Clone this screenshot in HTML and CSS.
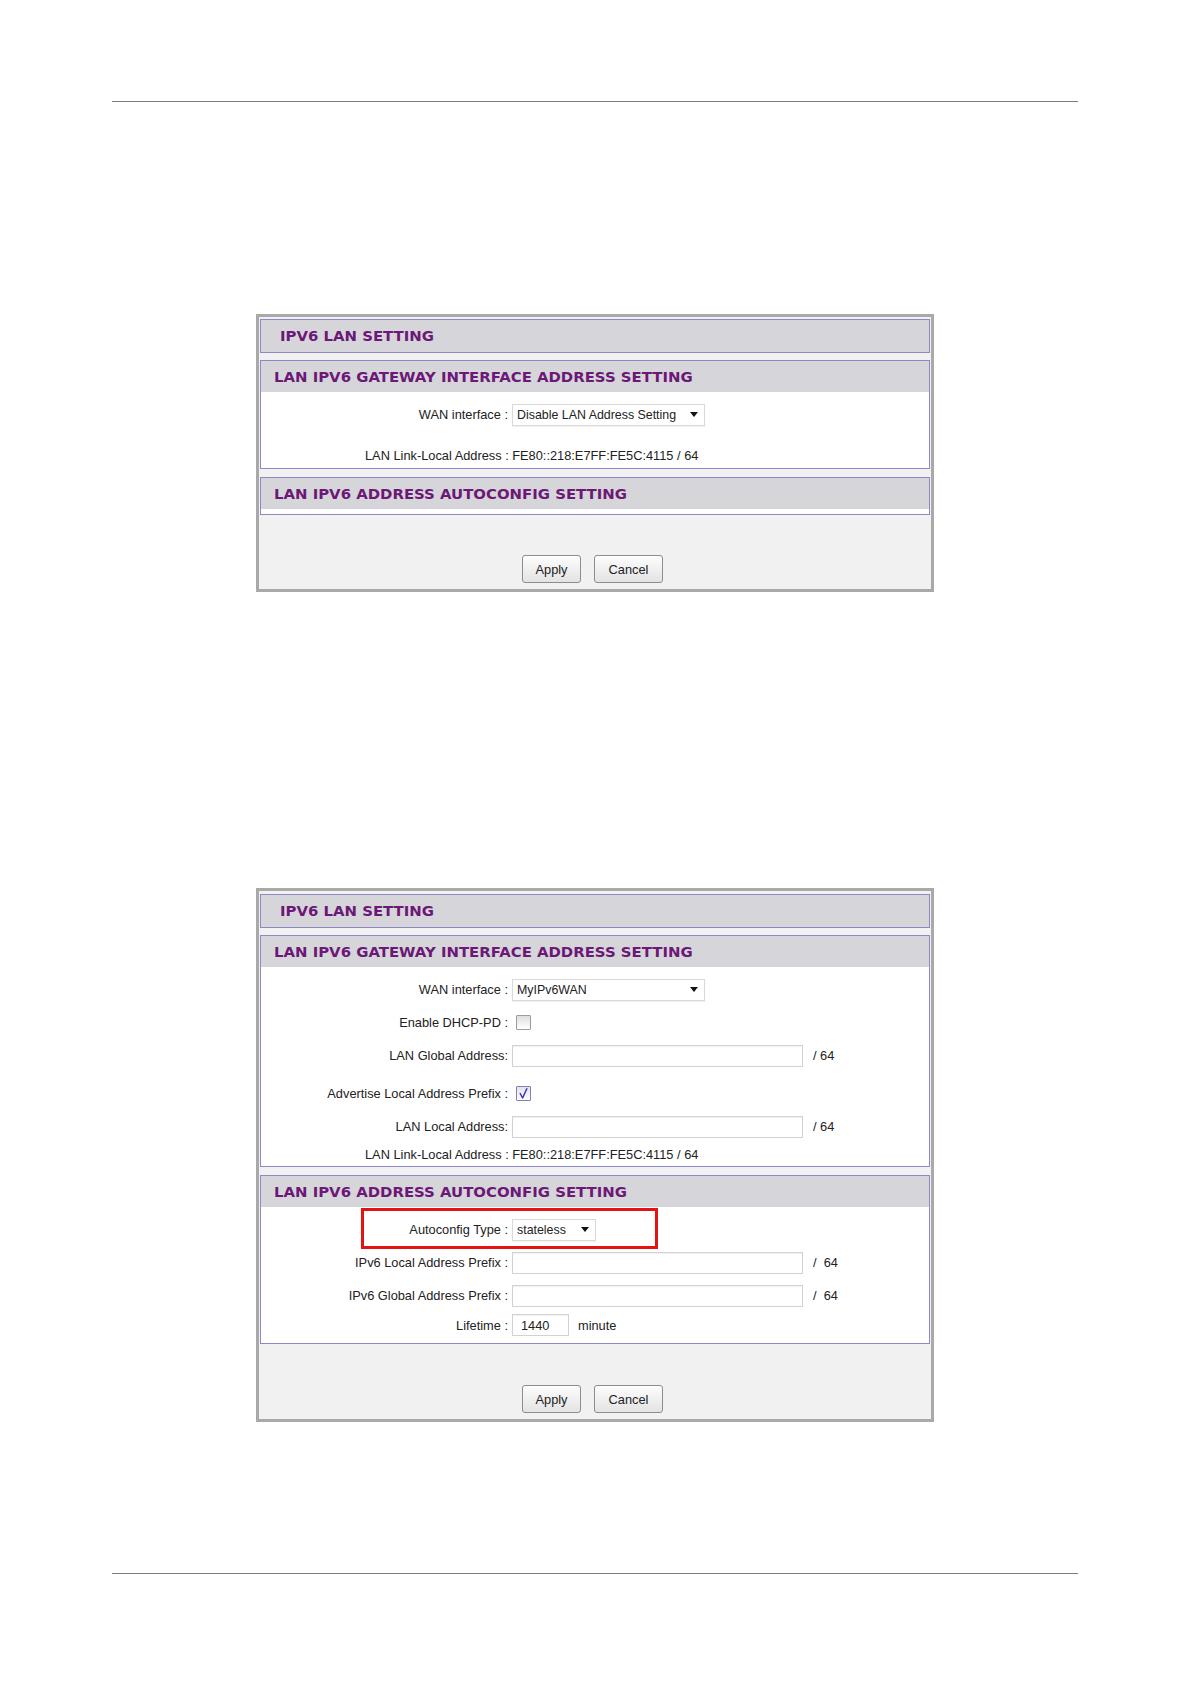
FILE: index.html
```html
<!DOCTYPE html>
<html lang="en">
<head>
<meta charset="utf-8">
<title>IPv6 LAN Setting</title>
<link rel="stylesheet" href="styles.css">
</head>
<body>
<div class="page">
  <div class="rule rule-top"></div>

  <div class="panel p1">
    <div class="title-box"><span class="head-text">IPV6 LAN SETTING</span></div>
    <div class="section">
      <div class="sec-head"><span class="head-text">LAN IPV6 GATEWAY INTERFACE ADDRESS SETTING</span></div>
      <div class="sec-body">
        <div class="row">
          <div class="lbl">WAN interface :</div>
          <div class="field"><div class="sel sel-wide"><span>Disable LAN Address Setting</span><span class="caret"></span></div></div>
        </div>
        <div class="info info-gap">LAN Link-Local Address : FE80::218:E7FF:FE5C:4115 / 64</div>
      </div>
    </div>
    <div class="section">
      <div class="sec-head"><span class="head-text">LAN IPV6 ADDRESS AUTOCONFIG SETTING</span></div>
      <div class="sec-body sec-empty"></div>
    </div>
    <div class="btn-bar">
      <button class="btn btn-apply" type="button">Apply</button>
      <button class="btn btn-cancel" type="button">Cancel</button>
    </div>
  </div>

  <div class="panel p2">
    <div class="title-box"><span class="head-text">IPV6 LAN SETTING</span></div>
    <div class="section">
      <div class="sec-head"><span class="head-text">LAN IPV6 GATEWAY INTERFACE ADDRESS SETTING</span></div>
      <div class="sec-body">
        <div class="row">
          <div class="lbl">WAN interface :</div>
          <div class="field"><div class="sel sel-wide"><span>MyIPv6WAN</span><span class="caret"></span></div></div>
        </div>
        <div class="row">
          <div class="lbl">Enable DHCP-PD :</div>
          <div class="field"><span class="chk"></span></div>
        </div>
        <div class="row">
          <div class="lbl">LAN Global Address:</div>
          <div class="field"><span class="inp"></span><span class="unit">/ 64</span></div>
        </div>
        <div class="row row-tall">
          <div class="lbl">Advertise Local Address Prefix :</div>
          <div class="field"><span class="chk chk-on"><svg width="13" height="13" viewBox="0 0 13 13"><path d="M3.2 6.5 L5.6 11 L9.8 1.8" fill="none" stroke="#3a3ab2" stroke-width="1.5" stroke-linecap="round" stroke-linejoin="round"/></svg></span></div>
        </div>
        <div class="row">
          <div class="lbl">LAN Local Address:</div>
          <div class="field"><span class="inp"></span><span class="unit">/ 64</span></div>
        </div>
        <div class="info info-last">LAN Link-Local Address : FE80::218:E7FF:FE5C:4115 / 64</div>
      </div>
    </div>
    <div class="section">
      <div class="sec-head"><span class="head-text">LAN IPV6 ADDRESS AUTOCONFIG SETTING</span></div>
      <div class="sec-body sec-auto">
        <div class="row">
          <div class="lbl">Autoconfig Type :</div>
          <div class="field"><div class="sel sel-narrow"><span>stateless</span><span class="caret"></span></div></div>
          <div class="highlight"></div>
        </div>
        <div class="row">
          <div class="lbl">IPv6 Local Address Prefix :</div>
          <div class="field"><span class="inp"></span><span class="unit">/&nbsp;&nbsp;64</span></div>
        </div>
        <div class="row">
          <div class="lbl">IPv6 Global Address Prefix :</div>
          <div class="field"><span class="inp"></span><span class="unit">/&nbsp;&nbsp;64</span></div>
        </div>
        <div class="row row-life">
          <div class="lbl">Lifetime :</div>
          <div class="field"><span class="inp inp-sm">1440</span><span class="unit-min">minute</span></div>
        </div>
      </div>
    </div>
    <div class="btn-bar">
      <button class="btn btn-apply" type="button">Apply</button>
      <button class="btn btn-cancel" type="button">Cancel</button>
    </div>
  </div>

  <div class="rule rule-bottom"></div>
</div>
</body>
</html>
```

FILE: styles.css
```css
* { box-sizing: border-box; }

body {
  margin: 0;
  background: #ffffff;
  font-family: "Liberation Sans", Arial, sans-serif;
  font-size: 12.8px;
  color: #222222;
}

.page {
  width: 1190px;
  padding-bottom: 110px;
}

.rule {
  height: 1px;
  width: 966px;
  margin-left: 112px;
  background: #7c7c7c;
}

.rule-top { margin-top: 101px; }
.rule-bottom { margin-top: 151px; }

.panel {
  width: 678px;
  margin-left: 256px;
  border: 3px solid #a9a9a9;
  background: #f1f1f1;
  padding: 2px 1px 6px 1px;
}

.p1 { margin-top: 212px; }
.p2 { margin-top: 296px; padding-top: 3px; }

.title-box {
  height: 34px;
  border: 1px solid #8f88c6;
  background: #d6d6da;
  display: flex;
  align-items: center;
  padding-left: 19px;
}

.head-text {
  font-family: "DejaVu Sans", Verdana, sans-serif;
  font-weight: bold;
  font-size: 14.9px;
  color: #6c1877;
  white-space: nowrap;
}

.section {
  margin-top: 7px;
  border: 1px solid #8f88c6;
  background: #ffffff;
}

.section + .section { margin-top: 8px; }

.sec-head {
  height: 31px;
  background: #d6d6da;
  display: flex;
  align-items: center;
  padding-left: 13px;
}

.sec-body { padding-top: 6px; }
.sec-empty { padding-top: 5px; }
.sec-auto { padding-bottom: 5px; }

.row {
  position: relative;
  display: grid;
  grid-template-columns: 247px auto;
  column-gap: 4px;
  align-items: center;
  height: 33px;
}

.row-tall { margin-top: 5px; }
.row-life { height: 26px; }

.lbl {
  text-align: right;
  white-space: nowrap;
}

.field {
  display: flex;
  align-items: center;
}

.info {
  height: 24px;
  line-height: 24px;
  padding-left: 104px;
  white-space: nowrap;
}

.info-gap { margin-top: 13px; }
.info-last { height: 23px; line-height: 23px; }

.sel {
  height: 22px;
  border: 1px solid #d9d9d9;
  background: #ffffff;
  display: flex;
  align-items: center;
  justify-content: space-between;
  padding: 0 6px 0 4px;
  box-shadow: 0 1px 1px rgba(0, 0, 0, 0.05);
  white-space: nowrap;
  font-size: 12.4px;
}

.sel-wide { width: 193px; }
.sel-narrow { width: 84px; }

.caret {
  width: 0;
  height: 0;
  border-left: 4px solid transparent;
  border-right: 4px solid transparent;
  border-top: 5px solid #111111;
}

.inp {
  display: flex;
  align-items: center;
  width: 291px;
  height: 22px;
  border: 1px solid #d2d2d2;
  background: #ffffff;
  box-shadow: inset 0 1px 1px rgba(0, 0, 0, 0.06);
}

.inp-sm {
  width: 57px;
  padding-left: 8px;
}

.unit { margin-left: 10px; }
.unit-min { margin-left: 9px; }

.chk {
  display: flex;
  align-items: center;
  justify-content: center;
  width: 15px;
  height: 15px;
  margin-left: 4px;
  border: 1px solid #9c9c9c;
  border-radius: 1px;
  background: linear-gradient(#dedede, #ffffff);
}

.chk-on {
  border-color: #8080b4;
  background: linear-gradient(#e2e2ec, #ffffff);
}

.highlight {
  position: absolute;
  left: 100px;
  top: -5px;
  width: 297px;
  height: 41px;
  border: 3px solid #e41313;
}

.btn-bar {
  display: flex;
  justify-content: center;
  gap: 13px;
  margin-top: 40px;
  padding-right: 5px;
}

.p2 .btn-bar { margin-top: 41px; }

.btn {
  height: 28px;
  border: 1px solid #8d8d8d;
  border-radius: 3px;
  background: linear-gradient(#fdfdfd, #e3e3e3);
  font-family: "Liberation Sans", Arial, sans-serif;
  font-size: 12.8px;
  color: #222222;
  padding: 0;
}

.btn-apply { width: 59px; }
.btn-cancel { width: 69px; }
```
